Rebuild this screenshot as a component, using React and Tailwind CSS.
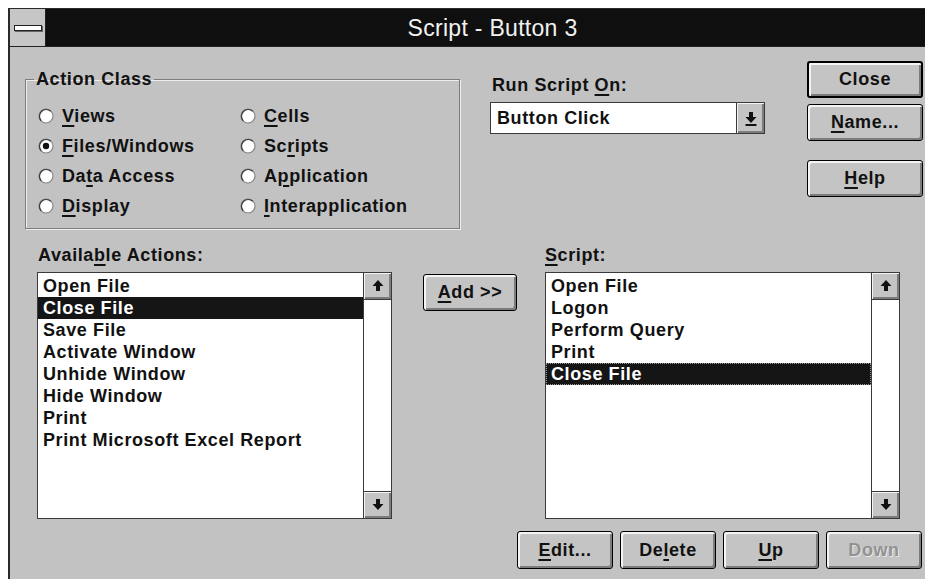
import { useState } from "react";

const ACTIONS = [
    "Open File",
    "Close File",
    "Save File",
    "Activate Window",
    "Unhide Window",
    "Hide Window",
    "Print",
    "Print Microsoft Excel Report",
];

const SCRIPT = ["Open File", "Logon", "Perform Query", "Print", "Close File"];

/* ========================= */
/* SMALL PIECES */
/* ========================= */

// underlined mnemonic letter
function K({ children }) {
    return <span className="underline decoration-[1.5px] underline-offset-[3px]">{children}</span>;
}

function Arrow({ down = false, bar = false }) {
    return (
        <svg width="12" height="15" viewBox="0 0 12 15">
            <g transform={down ? "rotate(180 6 6.5)" : undefined}>
                <polygon points="6,1 11.5,7 8,7 8,12 4,12 4,7 0.5,7" fill="#111" />
            </g>
            {bar && <rect x="0.5" y="13" width="11" height="2" fill="#111" />}
        </svg>
    );
}

function Radio({ checked, label, onClick }) {
    return (
        <button onClick={onClick} className="flex h-[30px] items-center gap-[8px] text-left">
            <svg width="16" height="16" viewBox="0 0 16 16">
                <circle cx="8" cy="8" r="7" fill="#fff" stroke="#858585" strokeWidth="1.2" />
                <path d="M3.2 12.8 A6.8 6.8 0 0 1 12.8 3.2" fill="none" stroke="#3a3a3a" strokeWidth="1.2" />
                {checked && <circle cx="8" cy="8" r="3.2" fill="#111" />}
            </svg>
            <span>{label}</span>
        </button>
    );
}

function Btn({ children, className = "", def = false, disabled = false }) {
    return (
        <button
            disabled={disabled}
            className={`flex items-center justify-center rounded-[3px] border-black bg-[#c4c4c4] shadow-[inset_2px_2px_0_#f4f4f4,inset_-2px_-2px_0_#7c7c7c] ${def ? "border-2" : "border"} ${disabled ? "text-[#929292] [text-shadow:1px_1px_0_#e8e8e8]" : "text-[#111]"} ${className}`}
        >
            {children}
        </button>
    );
}

function ScrollArrow({ down = false }) {
    return (
        <div
            className={`flex h-[27px] items-center justify-center border-[#3a3a3a] bg-[#c4c4c4] shadow-[inset_1px_1px_0_#f4f4f4,inset_-2px_-2px_0_#7c7c7c] ${down ? "border-t" : "border-b"}`}
        >
            <Arrow down={down} />
        </div>
    );
}

function ListBox({ items, selected, focus = false }) {
    return (
        <div className="flex h-[247px] w-[355px] border border-[#3a3a3a] bg-white">
            <ul className="flex-1 pt-[2px]">
                {items.map((item, i) => (
                    <li
                        key={item + i}
                        className={`h-[22px] pl-[5px] leading-[22px] ${i === selected ? "bg-[#151515] text-white" : "text-[#111]"} ${i === selected && focus ? "outline-1 outline-dotted outline-[#9a9a9a] -outline-offset-1" : ""}`}
                    >
                        {item}
                    </li>
                ))}
            </ul>
            <div className="flex w-[28px] flex-col justify-between border-l border-[#3a3a3a]">
                <ScrollArrow />
                <ScrollArrow down />
            </div>
        </div>
    );
}

/* ========================= */
/* DIALOG */
/* ========================= */

export default function App() {

    const [actionClass, setActionClass] = useState("files");

    const classes = [
        ["views", <><K>V</K>iews</>],
        ["cells", <><K>C</K>ells</>],
        ["files", <><K>F</K>iles/Windows</>],
        ["scripts", <>Sc<K>r</K>ipts</>],
        ["data", <>Da<K>t</K>a Access</>],
        ["app", <>A<K>p</K>plication</>],
        ["display", <><K>D</K>isplay</>],
        ["inter", <><K>I</K>nterapplication</>],
    ];

    return (
        <div className="h-[579px] w-[925px] overflow-hidden bg-white pl-[8px] pt-[8px] font-['Liberation_Sans',Arial,sans-serif] text-[18px] font-bold tracking-[0.6px] text-[#111]">

            <div className="flex h-full flex-col border-l-2 border-t border-[#2a2a2a] bg-[#c2c2c2]">

                {/* TITLE BAR */}
                <div className="flex h-[38px] shrink-0 border-b border-[#222] bg-[#0f0f0f]">
                    <div className="flex w-[36px] items-center justify-center border-r border-[#222] bg-[#c6c6c6]">
                        <div className="h-[6px] w-[28px] border border-[#222] bg-white shadow-[1px_1px_0_#666]" />
                    </div>
                    <div className="flex-1 pl-[14px] text-center text-[23px] font-normal leading-[38px] tracking-[0.3px] text-[#f2f2f2]">
                        Script - Button 3
                    </div>
                </div>

                {/* TOP ROW */}
                <div className="flex items-start">

                    <fieldset className="ml-[15px] mt-[22px] h-[160px] w-[435px] border border-[#7c7c7c] shadow-[inset_1px_1px_0_#eee,1px_1px_0_#eee]">
                        <legend className="ml-[8px] px-[2px] leading-[20px]">Action Class</legend>
                        <div className="grid grid-cols-[202px_auto] pl-[12px] pt-[12px]">
                            {classes.map(([id, label]) => (
                                <Radio
                                    key={id}
                                    label={label}
                                    checked={actionClass === id}
                                    onClick={() => setActionClass(id)}
                                />
                            ))}
                        </div>
                    </fieldset>

                    <div className="ml-[30px] mt-[28px]">
                        <div className="mb-[7px] h-[20px] pl-[2px] leading-[20px]">
                            Run Script <K>O</K>n:
                        </div>
                        <div className="flex h-[32px] w-[275px] border border-[#3a3a3a] bg-white">
                            <div className="flex-1 pl-[6px] leading-[30px]">Button Click</div>
                            <div className="flex w-[28px] items-center justify-center border-l border-[#3a3a3a] bg-[#c4c4c4] shadow-[inset_1px_1px_0_#f4f4f4,inset_-2px_-2px_0_#7c7c7c]">
                                <Arrow down bar />
                            </div>
                        </div>
                    </div>

                    <div className="ml-[42px] mt-[14px] flex flex-col">
                        <Btn def className="h-[37px] w-[116px]">Close</Btn>
                        <Btn className="mt-[6px] h-[37px] w-[116px]"><span><K>N</K>ame...</span></Btn>
                        <Btn className="mt-[19px] h-[37px] w-[116px]"><span><K>H</K>elp</span></Btn>
                    </div>
                </div>

                {/* LISTS */}
                <div className="mt-[16px] flex items-start">
                    <div className="ml-[27px]">
                        <div className="mb-[7px] h-[20px] pl-[1px] leading-[20px]">
                            Availa<K>b</K>le Actions:
                        </div>
                        <ListBox items={ACTIONS} selected={1} />
                    </div>

                    <Btn className="ml-[31px] mt-[29px] h-[37px] w-[94px]"><span><K>A</K>dd &gt;&gt;</span></Btn>

                    <div className="ml-[28px]">
                        <div className="mb-[7px] h-[20px] leading-[20px]">
                            <K>S</K>cript:
                        </div>
                        <ListBox items={SCRIPT} selected={4} focus />
                    </div>
                </div>

                {/* BOTTOM BUTTONS */}
                <div className="ml-[507px] mt-[12px] flex gap-[7px]">
                    <Btn className="h-[38px] w-[96px]"><span><K>E</K>dit...</span></Btn>
                    <Btn className="h-[38px] w-[96px]"><span>De<K>l</K>ete</span></Btn>
                    <Btn className="h-[38px] w-[96px]"><span><K>U</K>p</span></Btn>
                    <Btn disabled className="h-[38px] w-[96px]">Down</Btn>
                </div>
            </div>
        </div>
    );
}
